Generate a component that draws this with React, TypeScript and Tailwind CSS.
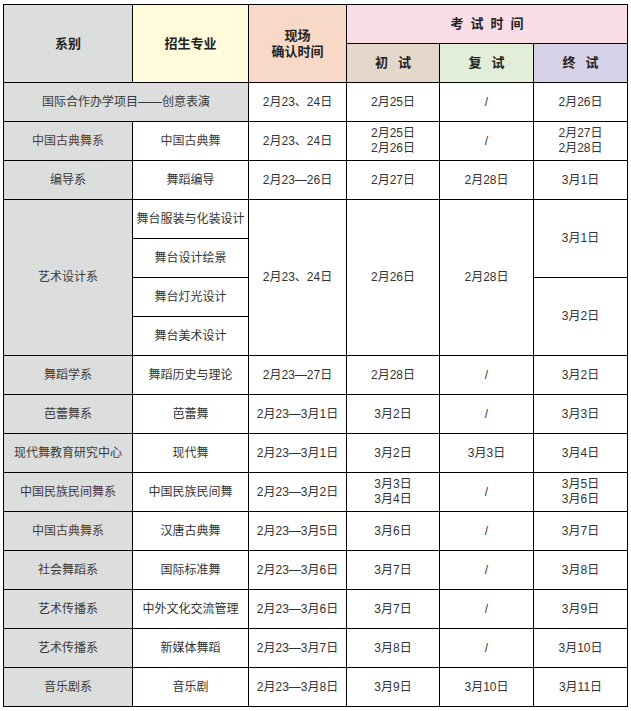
import React from "react";

type Cell = {
  t: React.ReactNode;
  cls?: string;
};

const body = "flex items-center justify-center text-center bg-white text-[12px] leading-[15px] text-[#333]";
const gray = "flex items-center justify-center text-center bg-[#dcdddd] text-[12px] leading-[15px] text-[#3a3a3a]";
const head = "flex items-center justify-center text-center text-[13px] leading-[16px] font-bold text-[#222]";

const two = (a: string, b: string) => (
  <span className="flex flex-col items-center leading-[15px]">
    <span>{a}</span>
    <span>{b}</span>
  </span>
);

function Row({ cells }: { cells: string[] }) {
  return (
    <>
      <div className={gray}>{cells[0]}</div>
      <div className={body}>{cells[1]}</div>
      <div className={body}>{cells[2]}</div>
      <div className={body}>{cells[3]}</div>
      <div className={body}>{cells[4]}</div>
      <div className={body}>{cells[5]}</div>
    </>
  );
}

export default function App() {
  return (
    <div
      className="w-[631px] h-[711px] bg-white pt-[4px] pl-[3px]"
      style={{ fontFamily: '"Liberation Sans", "Noto Sans CJK SC", sans-serif' }}
    >
      <div className="grid w-max grid-cols-[128px_115px_97px_92px_93px_93px] grid-rows-[repeat(18,38px)] gap-px bg-black p-px">
        {/* header */}
        <div className={`${head} row-span-2 bg-[#dcdddd]`}>系别</div>
        <div className={`${head} row-span-2 bg-[#fffbdb]`}>招生专业</div>
        <div className={`${head} row-span-2 bg-[#f8d9c7]`}>
          <span className="flex flex-col items-center">
            <span>现场</span>
            <span>确认时间</span>
          </span>
        </div>
        <div className={`${head} col-span-3 bg-[#fadde7]`}>
          <span className="flex gap-[7px]">
            <span>考</span>
            <span>试</span>
            <span>时</span>
            <span>间</span>
          </span>
        </div>
        <div className={`${head} bg-[#e6d7cb]`}>
          <span className="flex gap-[10px]">
            <span>初</span>
            <span>试</span>
          </span>
        </div>
        <div className={`${head} bg-[#e2eed8]`}>
          <span className="flex gap-[10px]">
            <span>复</span>
            <span>试</span>
          </span>
        </div>
        <div className={`${head} bg-[#d5d1e7]`}>
          <span className="flex gap-[10px]">
            <span>终</span>
            <span>试</span>
          </span>
        </div>

        {/* row: 国际合作 */}
        <div className={`${gray} col-span-2`}>国际合作办学项目——创意表演</div>
        <div className={body}>2月23、24日</div>
        <div className={body}>2月25日</div>
        <div className={body}>/</div>
        <div className={body}>2月26日</div>

        {/* 中国古典舞系 */}
        <div className={`${gray} text-[#4f3d37]`}>中国古典舞系</div>
        <div className={`${body} text-[#45393a]`}>中国古典舞</div>
        <div className={body}>2月23、24日</div>
        <div className={body}>{two("2月25日", "2月26日")}</div>
        <div className={body}>/</div>
        <div className={body}>{two("2月27日", "2月28日")}</div>

        <Row cells={["编导系", "舞蹈编导", "2月23—26日", "2月27日", "2月28日", "3月1日"]} />

        {/* 艺术设计系 */}
        <div className={`${gray} row-span-4`}>艺术设计系</div>
        <div className={body}>舞台服装与化装设计</div>
        <div className={`${body} row-span-4`}>2月23、24日</div>
        <div className={`${body} row-span-4`}>2月26日</div>
        <div className={`${body} row-span-4`}>2月28日</div>
        <div className={`${body} row-span-2`}>3月1日</div>
        <div className={body}>舞台设计绘景</div>
        <div className={body}>舞台灯光设计</div>
        <div className={`${body} row-span-2`}>3月2日</div>
        <div className={body}>舞台美术设计</div>

        <Row cells={["舞蹈学系", "舞蹈历史与理论", "2月23—27日", "2月28日", "/", "3月2日"]} />
        <Row cells={["芭蕾舞系", "芭蕾舞", "2月23—3月1日", "3月2日", "/", "3月3日"]} />
        <Row cells={["现代舞教育研究中心", "现代舞", "2月23—3月1日", "3月2日", "3月3日", "3月4日"]} />

        <div className={`${gray} text-[#46334a]`}>中国民族民间舞系</div>
        <div className={`${body} text-[#4f3d37]`}>中国民族民间舞</div>
        <div className={body}>2月23—3月2日</div>
        <div className={body}>{two("3月3日", "3月4日")}</div>
        <div className={body}>/</div>
        <div className={body}>{two("3月5日", "3月6日")}</div>

        <div className={`${gray} text-[#4f3d37]`}>中国古典舞系</div>
        <div className={body}>汉唐古典舞</div>
        <div className={body}>2月23—3月5日</div>
        <div className={body}>3月6日</div>
        <div className={body}>/</div>
        <div className={body}>3月7日</div>

        <Row cells={["社会舞蹈系", "国际标准舞", "2月23—3月6日", "3月7日", "/", "3月8日"]} />
        <Row cells={["艺术传播系", "中外文化交流管理", "2月23—3月6日", "3月7日", "/", "3月9日"]} />
        <Row cells={["艺术传播系", "新媒体舞蹈", "2月23—3月7日", "3月8日", "/", "3月10日"]} />
        <Row cells={["音乐剧系", "音乐剧", "2月23—3月8日", "3月9日", "3月10日", "3月11日"]} />
      </div>
    </div>
  );
}
